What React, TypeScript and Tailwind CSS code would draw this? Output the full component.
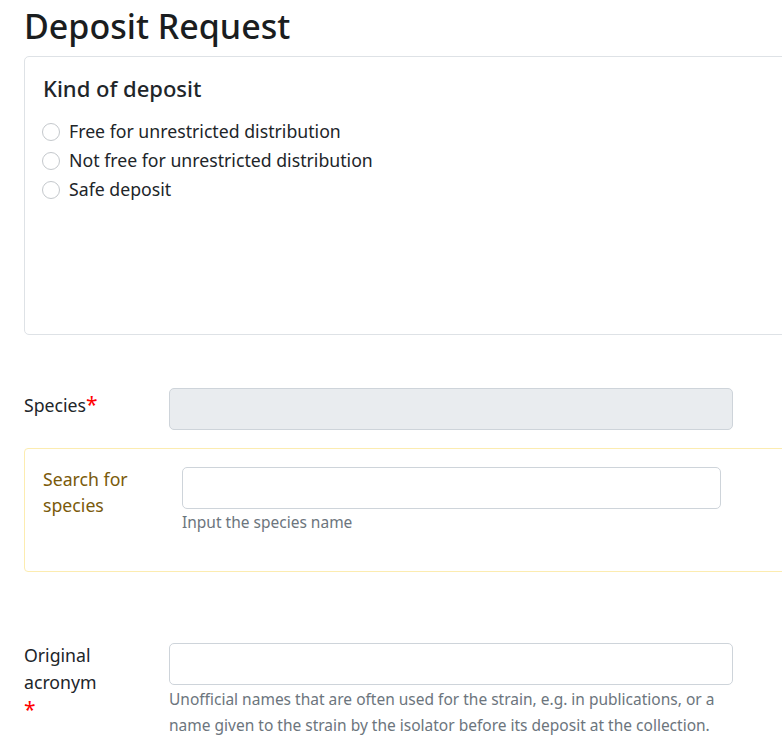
const font = { fontFamily: '"Noto Sans", "Open Sans", sans-serif' };

function Radio({ label }: { label: string }) {
    return (
        <label className="flex items-center h-[29px]">
            <span className="-ml-[1px] w-[18px] h-[18px] rounded-full border border-[#c4c8cc] bg-white shrink-0" />
            <span className="ml-[9px] text-[17.7px] text-[#212529]">{label}</span>
        </label>
    );
}

export default function App() {
    return (
        <div className="w-full overflow-x-hidden bg-white min-h-screen" style={font}>
            <div className="w-[840px] pl-6 text-[#212529]">

                {/* Title */}
                <h1 className="text-[34px] leading-[40px] font-medium pt-[6px] text-[#1a1d20]">
                    Deposit Request
                </h1>

                {/* Kind of deposit */}
                <div className="mt-[10px] h-[279px] border border-[#dee2e6] rounded-[5px] px-[18px] pt-[15px]">
                    <h2 className="text-[22px] leading-[32px] font-medium mb-[13px]">
                        Kind of deposit
                    </h2>
                    <div className="flex flex-col">
                        <Radio label="Free for unrestricted distribution" />
                        <Radio label="Not free for unrestricted distribution" />
                        <Radio label="Safe deposit" />
                    </div>
                </div>

                {/* Species */}
                <div className="flex mt-[53px] w-[709px]">
                    <div className="w-[145px] pt-[3px] text-[17.7px] leading-[26px]">
                        Species<span className="text-[#ff0000] text-[21px]">*</span>
                    </div>
                    <div className="flex-1 h-[42px] bg-[#e9ecef] border border-[#ced4da] rounded-[5px]" />
                </div>

                {/* Search for species */}
                <div className="mt-[18px] h-[124px] border border-[#fcecb0] rounded-[4px] pl-[18px] pt-[18px] flex">
                    <div className="w-[139px] -mt-[1px] text-[17.7px] leading-[26px] text-[#7a5a0a]">
                        Search for<br />species
                    </div>
                    <div className="w-[539px]">
                        <div className="h-[42px] border border-[#ced4da] rounded-[5px] bg-white" />
                        <div className="mt-[1px] text-[15.5px] leading-[24px] text-[#6c757d]">
                            Input the species name
                        </div>
                    </div>
                </div>

                {/* Original acronym */}
                <div className="flex mt-[71px] w-[709px]">
                    <div className="w-[145px] -mt-[1px] text-[17.7px] leading-[27px]">
                        Original<br />acronym<br />
                        <span className="text-[#ff0000] text-[21px]">*</span>
                    </div>
                    <div className="flex-1">
                        <div className="h-[42px] border border-[#ced4da] rounded-[5px] bg-white" />
                        <div className="mt-[1px] text-[15.5px] leading-[26px] text-[#6c757d]">
                            Unofficial names that are often used for the strain, e.g. in publications, or a name given to the strain by the isolator before its deposit at the collection.
                        </div>
                    </div>
                </div>

            </div>
        </div>
    );
}
